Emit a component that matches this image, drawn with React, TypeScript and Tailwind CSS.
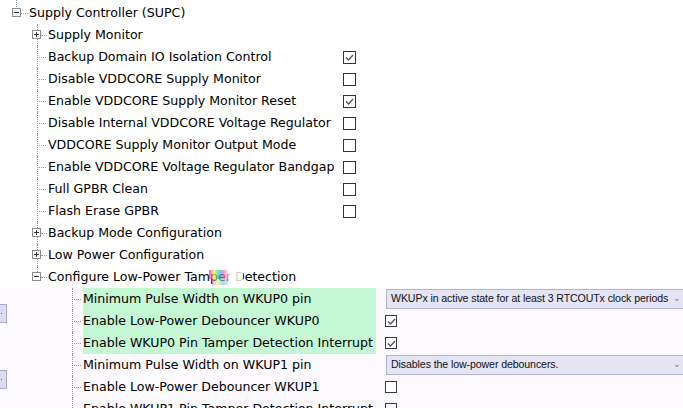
import React from 'react'

type Kind = 'plus' | 'minus' | 'leaf'

const dotV = 'absolute border-l border-dotted border-[#9a9a9a]'
const dotH = 'absolute border-t border-dotted border-[#9a9a9a]'

function Expander({ open }: { open: boolean }) {
  return (
    <span className="absolute left-[32px] top-[6px] w-[9px] h-[9px] bg-white border border-[#8c8c8c] flex items-center justify-center">
      <span className="absolute w-[5px] h-px bg-[#333]" />
      {!open && <span className="absolute h-[5px] w-px bg-[#333]" />}
    </span>
  )
}

function Check({ checked, small }: { checked?: boolean; small?: boolean }) {
  return (
    <span
      className={
        small
          ? 'w-[12px] h-[12px] border border-[#3a3a3a] bg-white flex items-center justify-center'
          : 'w-[13px] h-[13px] border-[1.5px] border-[#333] bg-white flex items-center justify-center'
      }
    >
      {checked && (
        <svg width="9" height="7" viewBox="0 0 9 7">
          <path d="M1 3.5 L3.5 6 L8 1" fill="none" stroke="#555" strokeWidth="1.3" />
        </svg>
      )}
    </span>
  )
}

function Row2({ kind, label, checked, last }: { kind: Kind; label: string; checked?: boolean; last?: boolean }) {
  return (
    <div className="h-[22px] flex items-center">
      <div className="relative w-[48px] h-full shrink-0">
        <span className={`${dotV} left-[37px] top-0 ${last ? 'h-[10px]' : 'h-full'}`} />
        {kind === 'leaf' ? (
          <span className={`${dotH} left-[37px] top-[11px] w-[9px]`} />
        ) : (
          <>
            <span className={`${dotH} left-[41px] top-[11px] w-[6px]`} />
            <Expander open={kind === 'minus'} />
          </>
        )}
      </div>
      <span className="w-[295px] shrink-0 whitespace-nowrap">{label}</span>
      {checked !== undefined && <Check checked={checked} />}
    </div>
  )
}

const supc: { kind: Kind; label: string; checked?: boolean }[] = [
  { kind: 'plus', label: 'Supply Monitor' },
  { kind: 'leaf', label: 'Backup Domain IO Isolation Control', checked: true },
  { kind: 'leaf', label: 'Disable VDDCORE Supply Monitor', checked: false },
  { kind: 'leaf', label: 'Enable VDDCORE Supply Monitor Reset', checked: true },
  { kind: 'leaf', label: 'Disable Internal VDDCORE Voltage Regulator', checked: false },
  { kind: 'leaf', label: 'VDDCORE Supply Monitor Output Mode', checked: false },
  { kind: 'leaf', label: 'Enable VDDCORE Voltage Regulator Bandgap', checked: false },
  { kind: 'leaf', label: 'Full GPBR Clean', checked: false },
  { kind: 'leaf', label: 'Flash Erase GPBR', checked: false },
  { kind: 'plus', label: 'Backup Mode Configuration' },
  { kind: 'plus', label: 'Low Power Configuration' },
]

type Tamper = { label: string; hl?: boolean; select?: string; checked?: boolean }

const tamper: Tamper[] = [
  { label: 'Minimum Pulse Width on WKUP0 pin', hl: true, select: 'WKUPx in active state for at least 3 RTCOUTx clock periods' },
  { label: 'Enable Low-Power Debouncer WKUP0', hl: true, checked: true },
  { label: 'Enable WKUP0 Pin Tamper Detection Interrupt', hl: true, checked: true },
  { label: 'Minimum Pulse Width on WKUP1 pin', select: 'Disables the low-power debouncers.' },
  { label: 'Enable Low-Power Debouncer WKUP1', checked: false },
  { label: 'Enable WKUP1 Pin Tamper Detection Interrupt', checked: false },
]

function SideButton() {
  return (
    <span className="block w-[7px] h-[19px] bg-[#dcdcf0] border border-[#a8a8c8] border-l-0 relative">
      <span className="absolute left-[1px] top-[8px] w-px h-px bg-[#666]" />
    </span>
  )
}

export default function App() {
  return (
    <div className="w-[683px] h-[408px] overflow-hidden bg-white text-black text-[12.6px] font-['DejaVu_Sans',sans-serif]">
      <div className="pt-[2px]">
        {/* root node */}
        <div className="h-[22px] flex items-center">
          <div className="relative w-[29px] h-full shrink-0">
            <span className={`${dotV} left-[16px] top-[-2px] h-[7px]`} />
            <span className={`${dotH} left-[21px] top-[11px] w-[7px]`} />
            <span className="absolute left-[12px] top-[6px] w-[9px] h-[9px] bg-white border border-[#8c8c8c] flex items-center justify-center">
              <span className="w-[5px] h-px bg-[#333]" />
            </span>
          </div>
          <span>Supply Controller (SUPC)</span>
        </div>
        {supc.map((r) => (
          <Row2 key={r.label} kind={r.kind} label={r.label} checked={r.checked} />
        ))}
        <div className="relative">
          <Row2 kind="minus" label="Configure Low-Power Tamper Detection" last />
          {/* render glitch over the label */}
          <span className="absolute left-[209px] top-[4px] w-[20px] h-[9px] bg-[linear-gradient(90deg,#f0f,#ff0,#0cf,#f6a,#fff)] opacity-70" />
          <span className="absolute left-[212px] top-[13px] w-[16px] h-[6px] bg-[linear-gradient(90deg,#c6f,#ff4,#6cf,#ccc)] opacity-60" />
          <span className="absolute left-[229px] top-[4px] w-[14px] h-[14px] bg-white/80" />
        </div>
      </div>

      <div className="flex bg-[#fcfaff] h-[200px]">
        <div className="w-[7px] shrink-0 flex flex-col">
          <span className="h-[16px]" />
          <SideButton />
          <span className="h-[47px]" />
          <SideButton />
        </div>
        <div>
          {tamper.map((t) => (
            <div key={t.label} className="h-[22px] flex items-center">
              <div className="relative w-[76px] h-full shrink-0">
                <span className={`${dotV} left-[65px] top-0 h-full`} />
                <span className={`${dotH} left-[65px] top-[11px] w-[9px]`} />
              </div>
              <span className={`w-[293px] h-full shrink-0 flex items-center whitespace-nowrap ${t.hl ? 'bg-[#c4f7d4]' : ''}`}>
                {t.label}
              </span>
              {t.select ? (
                <div className="ml-[10px] w-[298px] h-[20px] bg-[#e4e4f4] border border-[#b0b0d0] flex items-center pl-[4px] text-[10.6px] tracking-[-0.1px] font-['Liberation_Sans',sans-serif] text-[#111] whitespace-nowrap relative">
                  {t.select}
                  <span className="absolute right-[2px] top-[2px] text-[9px] text-[#777]">⌄</span>
                </div>
              ) : (
                <span className="ml-[9px]">
                  <Check small checked={t.checked} />
                </span>
              )}
            </div>
          ))}
        </div>
      </div>
    </div>
  )
}
